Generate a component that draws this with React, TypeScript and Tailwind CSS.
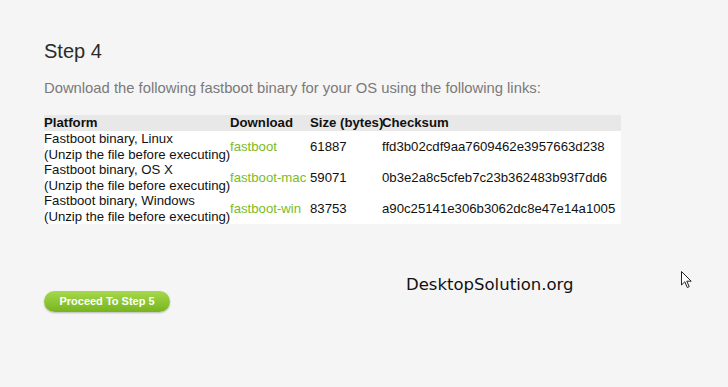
import React from "react";

const rows = [
  { os: "Linux", link: "fastboot", size: "61887", sum: "ffd3b02cdf9aa7609462e3957663d238" },
  { os: "OS X", link: "fastboot-mac", size: "59071", sum: "0b3e2a8c5cfeb7c23b362483b93f7dd6" },
  { os: "Windows", link: "fastboot-win", size: "83753", sum: "a90c25141e306b3062dc8e47e14a1005" },
];

export default function App() {
  return (
    <div className="relative w-[728px] h-[387px] overflow-hidden bg-[#f5f5f5] font-['Liberation_Sans',Arial,sans-serif]">
      <div className="pl-[44px] pt-[39px]">
        <h1 className="text-[20px] leading-[24px] text-[#2b2b2b] font-normal">Step 4</h1>
        <p className="mt-[16px] text-[14.8px] leading-[18px] text-[#7a7a7a] whitespace-nowrap">
          Download the following fastboot binary for your OS using the following links:
        </p>
        <table className="mt-[18px] w-[577px] border-collapse text-[13.2px] text-[#111] table-fixed">
          <thead>
            <tr className="bg-[#e8e8e8]">
              <th className="w-[186px] p-0 text-left font-bold leading-[16px] whitespace-nowrap">Platform</th>
              <th className="w-[80px] p-0 text-left font-bold leading-[16px] whitespace-nowrap">Download</th>
              <th className="w-[72px] p-0 text-left font-bold leading-[16px] whitespace-nowrap">Size (bytes)</th>
              <th className="p-0 text-left font-bold leading-[16px] whitespace-nowrap">Checksum</th>
            </tr>
          </thead>
          <tbody className="bg-white">
            {rows.map((r) => (
              <tr key={r.link}>
                <td className="p-0 leading-[15.5px] whitespace-nowrap align-middle">
                  Fastboot binary, {r.os}
                  <br />
                  (Unzip the file before executing)
                </td>
                <td className="p-0 leading-[15.5px] align-middle text-[#7cbb1f] whitespace-nowrap">{r.link}</td>
                <td className="p-0 leading-[15.5px] align-middle">{r.size}</td>
                <td className="p-0 leading-[15.5px] align-middle whitespace-nowrap">{r.sum}</td>
              </tr>
            ))}
          </tbody>
        </table>
        <div className="mt-[51px] flex items-start">
          <button className="mt-[16px] w-[126px] h-[21px] rounded-full bg-gradient-to-b from-[#a6d84a] to-[#76b51c] shadow-[0_1px_2px_rgba(0,0,0,0.25)] text-white text-[11px] font-bold leading-[21px] text-center">
            Proceed To Step 5
          </button>
          <div className="ml-[236px] font-['DejaVu_Sans',sans-serif] text-[16.5px] leading-[20px] text-[#111]">
            DesktopSolution.org
          </div>
        </div>
      </div>
      <svg className="absolute left-[681px] top-[271px]" width="12" height="18" viewBox="0 0 12 18">
        <path d="M0.5 0.5 L0.5 14 L3.8 10.8 L6.3 16.5 L8.2 15.7 L5.8 10.2 L10.2 10.2 Z" fill="#fff" stroke="#222" strokeWidth="1" strokeLinejoin="round" />
      </svg>
    </div>
  );
}
